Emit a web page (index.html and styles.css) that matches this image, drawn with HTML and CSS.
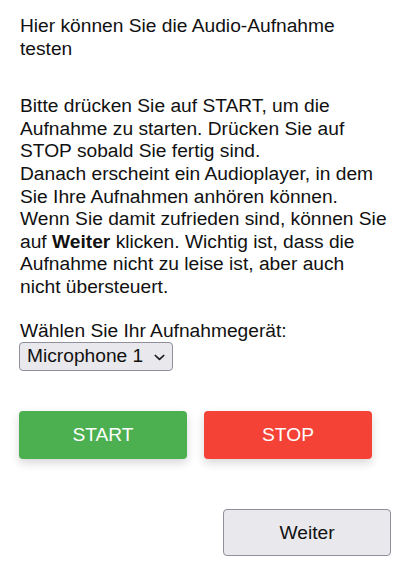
FILE: index.html
```html
<!DOCTYPE html>
<html lang="de">
<head>
<meta charset="utf-8">
<link rel="stylesheet" href="styles.css">
</head>
<body>
<div class="page">
  <p class="intro">Hier können Sie die Audio-Aufnahme testen</p>
  <p class="text">Bitte drücken Sie auf START, um die Aufnahme zu starten. Drücken Sie auf STOP sobald Sie fertig sind.<br>Danach erscheint ein Audioplayer, in dem Sie Ihre Aufnahmen anhören können. Wenn Sie damit zufrieden sind, können Sie auf <b>Weiter</b> klicken. Wichtig ist, dass die Aufnahme nicht zu leise ist, aber auch nicht übersteuert.</p>
  <div class="device">
    <label class="label" for="dev">Wählen Sie Ihr Aufnahmegerät:</label>
    <div class="select">
      <span>Microphone 1</span>
      <svg class="chev" width="11" height="7" viewBox="0 0 11 7"><path d="M1.3 1.5 L5.5 5.4 L9.7 1.5" fill="none" stroke="#1a1a1a" stroke-width="1.7" stroke-linecap="round" stroke-linejoin="round"/></svg>
    </div>
  </div>
  <div class="controls">
    <button class="btn start">START</button>
    <button class="btn stop">STOP</button>
  </div>
  <div class="next">
    <button class="weiter">Weiter</button>
  </div>
</div>
</body>
</html>
```
FILE: styles.css
```css
html, body {
  margin: 0;
  padding: 0;
  background: #ffffff;
}
body {
  font-family: "Liberation Sans", Arial, sans-serif;
  font-size: 19.2px;
  line-height: 22.6px;
  color: #111111;
}
.page {
  width: 372px;
  padding: 15px 0 0 19px;
  box-sizing: content-box;
}
.intro {
  margin: 0 3px 35px 1px;
}
.text {
  margin: 0 4px 21px 1px;
}
.text b {
  font-weight: bold;
}
.device {
  display: flex;
  flex-direction: column;
  align-items: flex-start;
}
.label {
  margin-left: 1px;
}
.select {
  display: flex;
  align-items: center;
  justify-content: space-between;
  box-sizing: border-box;
  width: 154px;
  height: 29px;
  padding: 0 7px 0 7px;
  background: #e9e9ed;
  border: 1px solid #8f8f9d;
  border-radius: 4px;
  font-size: 19.2px;
  color: #111;
}
.chev {
  margin-top: 1px;
}
.controls {
  display: flex;
  gap: 17px;
  margin-top: 40px;
}
.btn {
  width: 168px;
  height: 48px;
  border: none;
  border-radius: 4px;
  color: #ffffff;
  font-family: "Liberation Sans", Arial, sans-serif;
  font-size: 19.2px;
  box-shadow: 0 4px 10px rgba(0, 0, 0, 0.16);
  padding: 0;
}
.start {
  background: #4caf50;
}
.stop {
  background: #f44336;
}
.next {
  display: flex;
  justify-content: flex-end;
  margin-top: 50px;
}
.weiter {
  width: 168px;
  height: 47px;
  background: #e9e9ed;
  border: 1px solid #8f8f9d;
  border-radius: 4px;
  font-family: "Liberation Sans", Arial, sans-serif;
  font-size: 19.2px;
  color: #111;
  padding: 0;
}
```
